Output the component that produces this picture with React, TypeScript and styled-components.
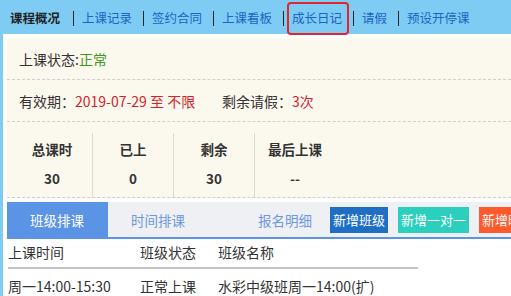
import React from 'react';
import styled, { createGlobalStyle } from 'styled-components';

const GlobalStyle = createGlobalStyle`
    html, body {
        margin: 0;
        padding: 0;
        background: #fff;
        font-family: "Noto Sans CJK SC", "Noto Sans", sans-serif;
        font-size: 14px;
        color: #333;
    }
`;

const Page = styled.div`
    width: 511px;
    height: 296px;
    overflow: hidden;
`;

const TopNav = styled.nav`
    display: flex;
    align-items: center;
    height: 34px;
    background: #7ecbf4;
    padding-left: 10px;
    font-size: 12.5px;
`;

const NavItem = styled.div<{ $first?: boolean }>`
    position: relative;
    display: flex;
    align-items: center;
    flex-shrink: 0;
    height: 34px;
    padding: ${p => (p.$first ? '0 13px 0 0' : '0 11px 0 9px')};
    color: ${p => (p.$first ? '#222' : '#1b63c6')};
    font-weight: ${p => (p.$first ? 700 : 400)};
    &::before {
        content: '';
        display: ${p => (p.$first ? 'none' : 'block')};
        position: absolute;
        left: 0;
        top: 11px;
        width: 1px;
        height: 15px;
        background: #222;
    }
`;

const NavLabel = styled.span<{ $marked?: boolean }>`
    position: relative;
    line-height: 34px;
    padding-top: 2px;
    &::after {
        content: '';
        display: ${p => (p.$marked ? 'block' : 'none')};
        position: absolute;
        top: 3px;
        bottom: 0;
        left: -5px;
        right: -7px;
        border: 2px solid #e3262b;
        border-radius: 4px;
    }
`;

const Body = styled.div`
    border-left: 3px solid #7ecbf4;
    padding: 4px 0 0 4px;
    height: 258px;
`;

const Summary = styled.section`
    background: #fbf8ee;
    border-bottom: 1px dashed #cfcfcf;
`;

const InfoRow = styled.div`
    display: flex;
    align-items: center;
    height: 41px;
    padding-left: 12px;
    border-bottom: 1px dashed #cfcfcf;
`;

const InfoItem = styled.span<{ $width?: number }>`
    width: ${p => (p.$width ? `${p.$width}px` : 'auto')};
    white-space: nowrap;
`;

const Value = styled.span<{ $tone: 'red' | 'green' }>`
    color: ${p => (p.$tone === 'red' ? '#d4232b' : '#3f9a1c')};
`;

const Stats = styled.div`
    display: flex;
    padding: 11px 0 0 5px;
    height: 64px;
`;

const StatCol = styled.div<{ $last?: boolean }>`
    width: 80px;
    padding-top: 6px;
    display: flex;
    flex-direction: column;
    align-items: center;
    gap: 9px;
    font-size: 13.5px;
    font-weight: 700;
    color: #333;
    border-right: ${p => (p.$last ? 'none' : '1px solid #dcdcd4')};
`;

const TabBar = styled.div`
    display: flex;
    align-items: center;
    height: 35px;
    margin-top: 4px;
    background: #eef0f4;
    border-bottom: 2px solid #5b93e5;
    overflow: hidden;
`;

const Tab = styled.div<{ $active?: boolean; $width: number; $gap?: number }>`
    flex-shrink: 0;
    width: ${p => p.$width}px;
    margin-left: ${p => p.$gap ?? 0}px;
    height: 35px;
    padding-left: 23px;
    box-sizing: border-box;
    display: flex;
    align-items: center;
    background: ${p => (p.$active ? '#5b93e5' : 'transparent')};
    color: ${p => (p.$active ? '#fff' : '#6e98e0')};
    font-size: 13.5px;
`;

const ButtonGroup = styled.div`
    display: flex;
    flex-shrink: 0;
    gap: 10px;
    margin-left: 3px;
`;

const ActionButton = styled.div<{ $color: string }>`
    height: 26px;
    padding: 0 3px;
    display: flex;
    align-items: center;
    background: ${p => p.$color};
    color: #fff;
    font-size: 13px;
    white-space: nowrap;
`;

const Table = styled.table`
    border-collapse: collapse;
    margin-left: 1px;
    & th, & td {
        text-align: left;
        font-weight: 400;
        padding: 0;
        white-space: nowrap;
        color: #333;
        font-size: 14px;
    }
    & th {
        height: 29px;
        padding-bottom: 2px;
        box-sizing: border-box;
        border-bottom: 2px solid #c4c4c4;
    }
    & td {
        height: 34px;
    }
`;

const navItems = ['上课记录', '签约合同', '上课看板', '成长日记', '请假', '预设开停课'];

const stats = [
    { label: '总课时', value: '30' },
    { label: '已上', value: '0' },
    { label: '剩余', value: '30' },
    { label: '最后上课', value: '--' },
];

const App: React.FC = () => {
    return (
        <Page>
            <GlobalStyle />
            <TopNav>
                <NavItem $first>
                    <NavLabel>课程概况</NavLabel>
                </NavItem>
                {navItems.map(item => (
                    <NavItem key={item}>
                        <NavLabel $marked={item === '成长日记'}>{item}</NavLabel>
                    </NavItem>
                ))}
            </TopNav>
            <Body>
                <Summary>
                    <InfoRow>
                        <InfoItem>
                            上课状态:<Value $tone="green">正常</Value>
                        </InfoItem>
                    </InfoRow>
                    <InfoRow>
                        <InfoItem $width={203}>
                            有效期：<Value $tone="red">2019-07-29 至 不限</Value>
                        </InfoItem>
                        <InfoItem>
                            剩余请假：<Value $tone="red">3次</Value>
                        </InfoItem>
                    </InfoRow>
                    <Stats>
                        {stats.map((s, i) => (
                            <StatCol key={s.label} $last={i === stats.length - 1}>
                                <span>{s.label}</span>
                                <span>{s.value}</span>
                            </StatCol>
                        ))}
                    </Stats>
                </Summary>
                <TabBar>
                    <Tab $active $width={101}>班级排课</Tab>
                    <Tab $width={100}>时间排课</Tab>
                    <Tab $width={92} $gap={27}>报名明细</Tab>
                    <ButtonGroup>
                        <ActionButton $color="#1e6fc4">新增班级</ActionButton>
                        <ActionButton $color="#2ccfbd">新增一对一</ActionButton>
                        <ActionButton $color="#ff5a2c">新增晚托</ActionButton>
                    </ButtonGroup>
                </TabBar>
                <Table>
                    <colgroup>
                        <col width={132} />
                        <col width={78} />
                        <col width={200} />
                    </colgroup>
                    <thead>
                        <tr>
                            <th>上课时间</th>
                            <th>班级状态</th>
                            <th>班级名称</th>
                        </tr>
                    </thead>
                    <tbody>
                        <tr>
                            <td>周一14:00-15:30</td>
                            <td>正常上课</td>
                            <td>水彩中级班周一14:00(扩)</td>
                        </tr>
                    </tbody>
                </Table>
            </Body>
        </Page>
    );
};

export default App;
